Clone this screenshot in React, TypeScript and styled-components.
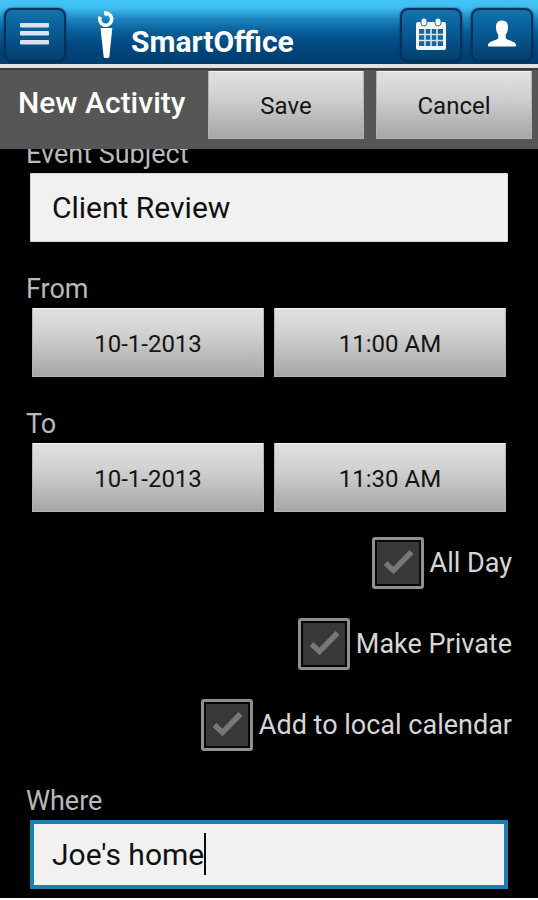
import React, { useLayoutEffect, useState } from "react";
import styled, { createGlobalStyle, css } from "styled-components";

const FONT = 'Roboto, "Liberation Sans", sans-serif';
const INPUT_FONT = `30px ${FONT}`;

const GlobalStyle = createGlobalStyle`
  *, *::before, *::after { box-sizing: border-box; }
  body { margin: 0; background: #000; font-family: ${FONT}; }
  button, input { font-family: inherit; }
`;

const Page = styled.div`
  display: flex;
  flex-direction: column;
  min-height: 100vh;
  background: #000;
  border-bottom: 2px solid #fff;
`;

const Header = styled.header`
  display: flex;
  align-items: center;
  height: 68px;
  padding: 5px 5px 0 4px;
  border-bottom: 4px solid #dde3e8;
  background: linear-gradient(#43c4f6 0, #3dbdf1 8px, #1a80bc 20px, #075d97 32px, #01477d 46px, #013e70 64px);
`;

const IconButton = styled.button`
  display: grid;
  place-items: center;
  width: 62px;
  height: 54px;
  padding: 0 0 2px;
  border: 2px solid #04305a;
  border-radius: 8px;
  background: linear-gradient(#1273ad, #075b93 45%, #023f70);
  box-shadow: 0 0 2px #04305a;
  cursor: pointer;
`;

const Brand = styled.a`
  display: flex;
  align-items: flex-end;
  gap: 15px;
  margin-left: 30px;
  height: 49px;
  color: #fff;
  text-decoration: none;
  font-size: 30px;
  line-height: 34px;
  font-weight: 700;
`;

const HeaderActions = styled.nav`
  display: flex;
  gap: 9px;
  margin-left: auto;
`;

const Toolbar = styled.div`
  display: flex;
  align-items: flex-start;
  gap: 12px;
  height: 81px;
  padding: 1px 6px 0 18px;
  border-top: 2px solid #3e3c3c;
  background: #565656;
`;

const Title = styled.h1`
  flex: 1;
  margin: 0;
  color: #fff;
  font-size: 30px;
  line-height: 64px;
  font-weight: 500;
  white-space: nowrap;
`;

const GreyButton = styled.button<{ $wide?: boolean }>`
  ${(p) => (p.$wide ? css`flex: 1; height: 69px;` : css`width: 156px; height: 68px;`)}
  padding: 2px 0 0;
  border: 1px solid #b4b4b4;
  border-top-color: #f4f4f4;
  border-radius: 1px;
  background: linear-gradient(#e0e0e0, #d2d2d2 35%, #a6a6a6);
  color: #141414;
  font-size: 24px;
  cursor: pointer;
`;

const Scroller = styled.main`
  flex: 1;
  overflow: hidden;
`;

const Form = styled.form`
  display: flex;
  flex-direction: column;
  margin-top: -10px;
  padding: 0 26px 9px;
`;

const FieldStack = styled.div`
  display: flex;
  flex-direction: column;
  gap: 32px;
`;

const Field = styled.div`
  display: flex;
  flex-direction: column;
  gap: 4px;
`;

const labelText = css`
  color: #b9b9b9;
  font-size: 27px;
  line-height: 30px;
`;

const Label = styled.label`
  ${labelText}
`;

const GroupLabel = styled.span`
  ${labelText}
`;

const InputFrame = styled.div`
  position: relative;
  margin: 0 4px;
`;

const TextInput = styled.input<{ $active?: boolean }>`
  display: block;
  width: 100%;
  height: 69px;
  padding: 0 ${(p) => (p.$active ? 18 : 21)}px;
  border: ${(p) => (p.$active ? "4px solid #1c80b0" : "1px solid #d8d8d8")};
  border-radius: 1px;
  outline: none;
  background: #f1f1f1;
  color: #101010;
  caret-color: ${(p) => (p.$active ? "transparent" : "#111")};
  font: ${INPUT_FONT};
`;

const Caret = styled.span`
  position: absolute;
  top: 13px;
  width: 2px;
  height: 42px;
  background: #0c0c0c;
  pointer-events: none;
`;

const ButtonRow = styled.div`
  display: flex;
  gap: 10px;
  padding: 0 6px;
`;

const Options = styled.div`
  display: flex;
  flex-direction: column;
  align-items: flex-end;
  gap: 29px;
  margin: 25px 0 35px;
`;

const Option = styled.label`
  display: flex;
  align-items: center;
  gap: 6px;
  color: #d6d6d6;
  font-size: 27px;
  line-height: 32px;
  cursor: pointer;
`;

const TickBox = styled.span`
  display: grid;
  width: 52px;
  height: 52px;
  > * { grid-area: 1 / 1; }
  svg { pointer-events: none; color: #777; }
  input:checked + svg { color: #33b5e5; }
`;

const Checkbox = styled.input`
  appearance: none;
  width: 52px;
  height: 52px;
  margin: 0;
  border: 3px solid #8f8f8f;
  border-radius: 3px;
  background: #383838;
  box-shadow: inset 0 0 0 2px #080808;
  cursor: pointer;
`;

const MenuIcon = () => (
  <svg width="32" height="24" viewBox="0 0 32 24" aria-hidden="true">
    {[1, 9, 18].map((y) => (
      <rect key={y} x="1" y={y} width="29" height="4.500" rx="1" fill="#dfe2ea" />
    ))}
  </svg>
);

const TorchIcon = () => (
  <svg width="20" height="48" viewBox="0 0 20 48" fill="#fff" aria-hidden="true">
    <path d="M4.200 5.800A6 6 0 1 0 10.500 2.300" fill="none" stroke="#fff" strokeWidth="3.600" />
    <path d="M7.800 0 12.500.8 10.500 5.600 8.200 3.800Z" />
    <path d="M4.500 17h11.800l-2.900 28.500q-.2 1.500-1.500 1.500h-2.800q-1.300 0-1.500-1.500Z" />
  </svg>
);

const CalendarIcon = () => (
  <svg width="30" height="32" viewBox="0 0 30 32" aria-hidden="true">
    <rect x="0" y="4" width="30" height="28" rx="2" fill="#f0f6fd" />
    <rect x="3" y="11" width="24" height="17" fill="#17659a" />
    <path d="M3 16.500h24M3 22.500h24M9 11v17M15 11v17M21 11v17" stroke="#d3e4f2" strokeWidth="1.600" />
    {[8, 22].map((x) => (
      <rect key={x} x={x - 3} y="0" width="6" height="8" rx="3" fill="#f4f9ff" stroke="#2474a8" strokeWidth="1" />
    ))}
  </svg>
);

const PersonIcon = () => (
  <svg width="30" height="28" viewBox="0 0 30 28" fill="#fff" aria-hidden="true">
    <path d="M15 .5c4.400 0 6 2.900 6 6.500 0 3.500-.8 6-2.300 7.800v3.200c.8 1.400 3 2 5.600 2.900 3.400 1.200 4.900 2.600 4.900 4.600q0 1-1.200 1H2q-1.200 0-1.200-1c0-2 1.500-3.400 4.900-4.600 2.600-.9 4.800-1.500 5.600-2.900v-3.200C9.800 13 9 10.500 9 7 9 3.400 10.600.5 15 .5Z" />
  </svg>
);

const TickIcon = () => (
  <svg width="52" height="52" viewBox="0 0 52 52" aria-hidden="true">
    <path d="m13.500 26 8 7.500L39.500 15" fill="none" stroke="currentColor" strokeWidth="5.500" />
  </svg>
);

function textWidth(text: string) {
  const context = document.createElement("canvas").getContext("2d");
  if (!context) return 0;
  context.font = INPUT_FONT;
  return Math.round(context.measureText(text).width);
}

function PlaceField() {
  const [place, setPlace] = useState("Joe's home");
  const [caretLeft, setCaretLeft] = useState(0);
  useLayoutEffect(() => setCaretLeft(22 + textWidth(place)), [place]);
  return (
    <Field>
      <Label htmlFor="where">Where</Label>
      <InputFrame>
        <TextInput id="where" $active value={place} onChange={(e) => setPlace(e.target.value)} />
        <Caret style={{ left: caretLeft }} />
      </InputFrame>
    </Field>
  );
}

function MomentField({ label, date, time }: { label: string; date: string; time: string }) {
  const id = `moment-${label}`;
  return (
    <Field role="group" aria-labelledby={id}>
      <GroupLabel id={id}>{label}</GroupLabel>
      <ButtonRow>
        <GreyButton type="button" $wide>{date}</GreyButton>
        <GreyButton type="button" $wide>{time}</GreyButton>
      </ButtonRow>
    </Field>
  );
}

export default function App() {
  return (
    <>
      <GlobalStyle />
      <Page>
        <Header>
          <IconButton type="button" aria-label="Menu"><MenuIcon /></IconButton>
          <Brand href="#"><TorchIcon />SmartOffice</Brand>
          <HeaderActions>
            <IconButton type="button" aria-label="Calendar"><CalendarIcon /></IconButton>
            <IconButton type="button" aria-label="Contacts"><PersonIcon /></IconButton>
          </HeaderActions>
        </Header>
        <Toolbar>
          <Title>New Activity</Title>
          <GreyButton type="submit" form="activity">Save</GreyButton>
          <GreyButton type="button">Cancel</GreyButton>
        </Toolbar>
        <Scroller>
          <Form id="activity" onSubmit={(e) => e.preventDefault()}>
            <FieldStack>
              <Field>
                <Label htmlFor="subject">Event Subject</Label>
                <InputFrame>
                  <TextInput id="subject" defaultValue="Client Review" />
                </InputFrame>
              </Field>
              <MomentField label="From" date="10-1-2013" time="11:00 AM" />
              <MomentField label="To" date="10-1-2013" time="11:30 AM" />
            </FieldStack>
            <Options>
              {["All Day", "Make Private", "Add to local calendar"].map((name) => (
                <Option key={name}>
                  <TickBox>
                    <Checkbox type="checkbox" />
                    <TickIcon />
                  </TickBox>
                  {name}
                </Option>
              ))}
            </Options>
            <PlaceField />
          </Form>
        </Scroller>
      </Page>
    </>
  );
}
